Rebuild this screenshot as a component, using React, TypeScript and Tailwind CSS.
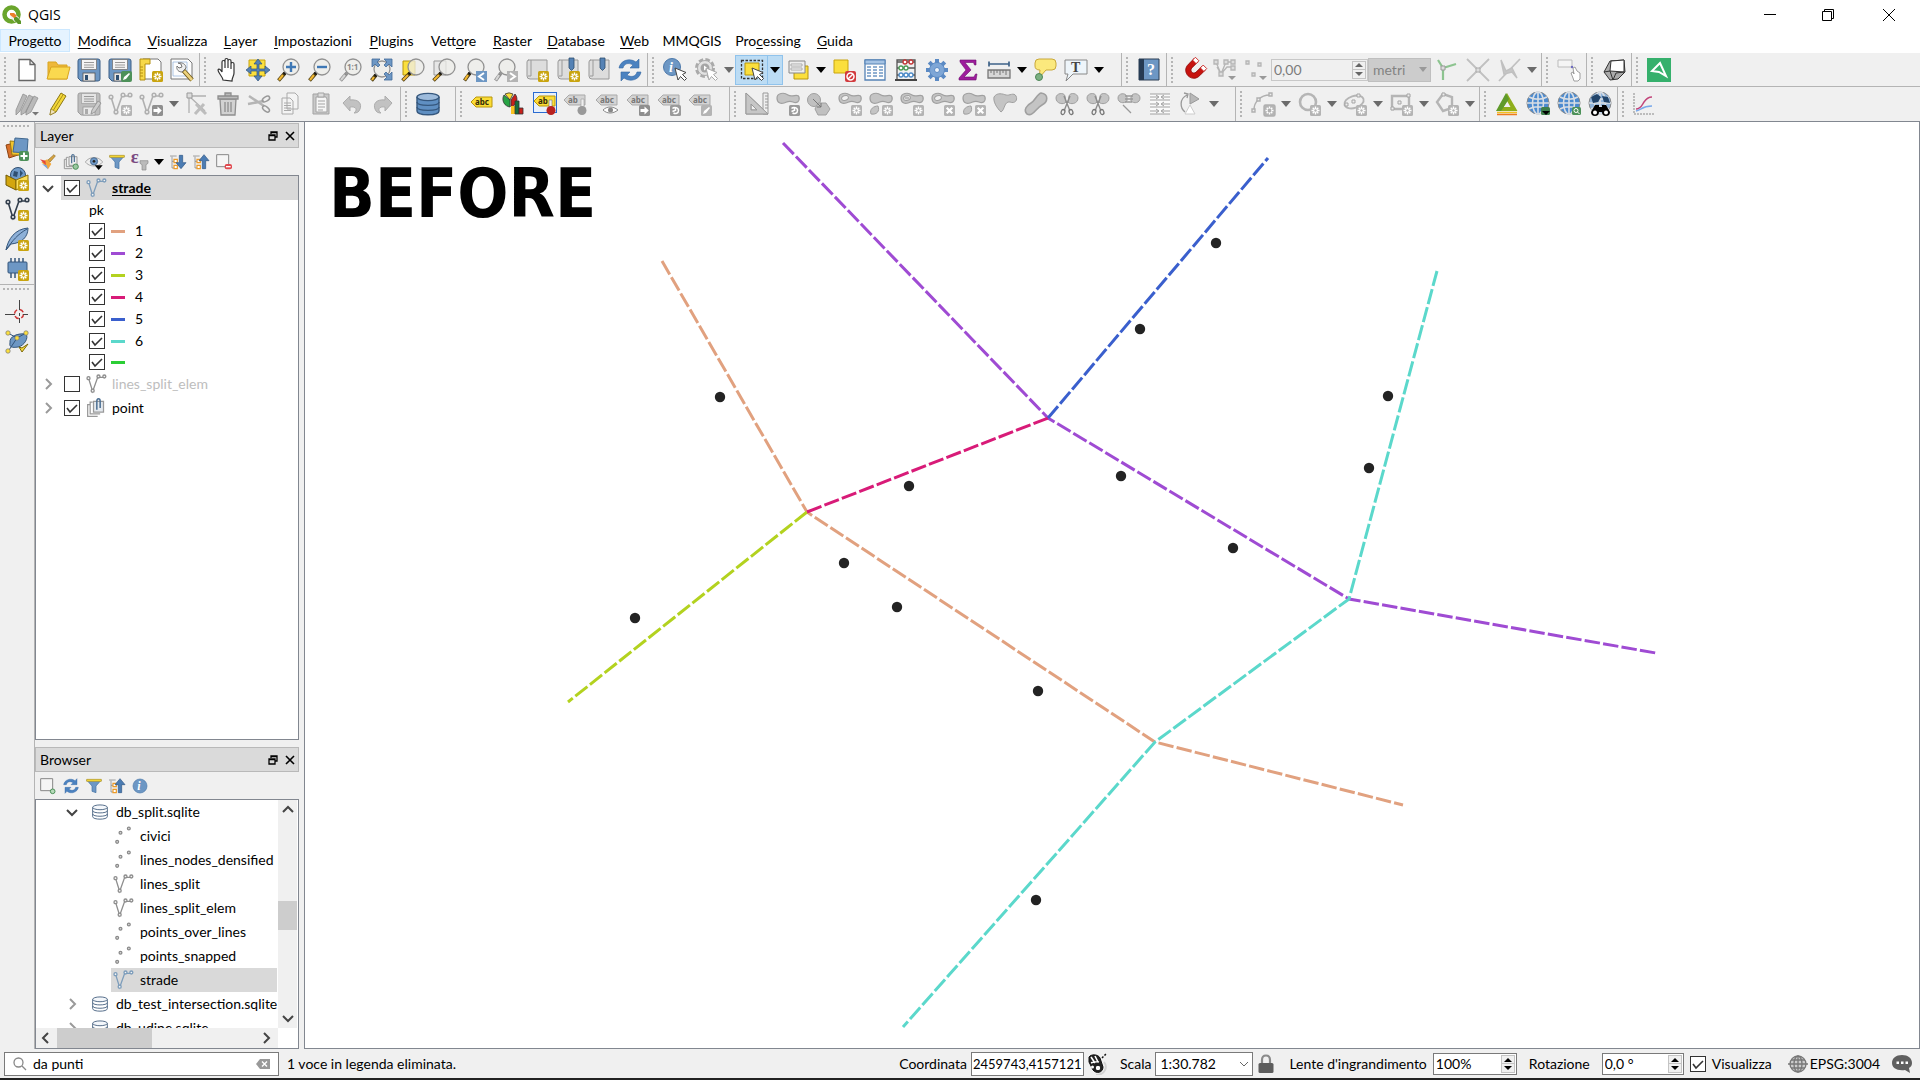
import type { ReactNode } from "react";

const BLUE = "#6d97c4";
const NAVY = "#2f4f70";

/* ---------- small parts shared by the icons ---------- */

function Svg({ children, size = "size-6" }: { children: ReactNode; size?: string }) {
  return (
    <svg viewBox="0 0 24 24" className={`${size} shrink-0 overflow-visible`} fill="none" aria-hidden="true">
      {children}
    </svg>
  );
}

function StarBadge({ off }: { off?: boolean }) {
  return (
    <g>
      <rect x="13" y="13" width="11" height="11" rx="1.5" fill={off ? "#b4b4b4" : "#c9a40f"} />
      <path d="M18.5 14.5v8M14.5 18.5h8M15.7 15.7l5.6 5.6M21.3 15.7l-5.6 5.6" stroke="#fff" strokeWidth="1.4" />
      <circle cx="18.5" cy="18.5" r="1.2" fill={off ? "#b4b4b4" : "#c9a40f"} />
    </g>
  );
}

function ArrowBadge({ fill = "#8f8f8f" }: { fill?: string }) {
  return (
    <g>
      <rect x="13" y="13" width="11" height="11" rx="1.5" fill={fill} />
      <path d="M14.5 17h4v-2.5l4.3 4-4.3 4V20h-4z" fill="#fff" />
    </g>
  );
}

function CrossBadge() {
  return (
    <g>
      <rect x="13" y="13" width="11" height="11" rx="1.5" fill="#b4b4b4" />
      <path d="M15.7 15.7l5.6 5.6M21.3 15.7l-5.6 5.6" stroke="#fff" strokeWidth="2.2" />
    </g>
  );
}

function RotateBadge() {
  return (
    <g>
      <rect x="13" y="13" width="11" height="11" rx="1.5" fill="#9a9a9a" />
      <path d="M15.5 16.5c2-2 6-1 6 2s-3 3.5-5 2.5M18 18.5l-2.5 1M18.5 16v3" stroke="#fff" strokeWidth="1.5" />
    </g>
  );
}

function Lens({ x = 14, y = 9, off }: { x?: number; y?: number; off?: boolean }) {
  return (
    <g>
      <path d={`M${x - 6} ${y + 6}L1.5 22.5`} stroke={off ? "#8c8c8c" : "#4a3b12"} strokeWidth="3.6" />
      <path d={`M${x - 8} ${y + 8}L2 22`} stroke={off ? "#d5d5d5" : "#f2b832"} strokeWidth="2.2" />
      <path d={`M${x - 5} ${y + 5}l-2 2`} stroke={off ? "#999" : "#111"} strokeWidth="3" />
      <circle cx={x} cy={y} r="8" fill="#eeeeea" fillOpacity=".75" stroke="#929292" strokeWidth="1.3" />
    </g>
  );
}

function Pointer({ off }: { off?: boolean }) {
  return (
    <path
      d="M12 10l3 12 2.5-3.5 4 4 2-2-4-4 3.5-2z"
      fill="#fff"
      stroke={off ? "#aaa" : "#444"}
      strokeWidth="1"
    />
  );
}

function Tag({ text, off, x = 0, y = 3 }: { text: string; off?: boolean; x?: number; y?: number }) {
  return (
    <g>
      <path
        d={`M${x} ${y + 5}l5-5h16v10H${x + 5}z`}
        fill={off ? "#d4d4d4" : "#fbdc35"}
        stroke={off ? "#a9a9a9" : "#b8960c"}
      />
      <text
        x={x + 4}
        y={y + 8}
        fontSize="8"
        fontWeight="700"
        fontFamily="Noto Sans, sans-serif"
        fill={off ? "#777" : "#332b08"}
      >
        {text}
      </text>
    </g>
  );
}

function Line({ color, dot = color }: { color: string; dot?: string }) {
  return (
    <g stroke={color} strokeWidth="1.6">
      <path d="M3 5l5 16 6-17h8" />
      <g fill="#f4f4f4" stroke={dot}>
        <circle cx="3" cy="5" r="1.8" />
        <circle cx="8" cy="20" r="1.8" />
        <circle cx="15" cy="3" r="1.8" />
        <circle cx="22" cy="3" r="1.8" />
      </g>
    </g>
  );
}

function Globe({ dark }: { dark?: boolean }) {
  return (
    <g>
      <circle cx="12" cy="11" r="11" fill={dark ? "#8fb4dc" : "#4c8bd0"} stroke="#8a8a8a" />
      <path d="M12 0v22M1 11h22M3 5c5 3 13 3 18 0M3 17c5-3 13-3 18 0" stroke="#d9dee4" strokeWidth="1.6" />
      <ellipse cx="12" cy="11" rx="5.5" ry="11" stroke="#d9dee4" strokeWidth="1.6" />
      {dark && <path d="M3 5l6-3 4 3-3 5-5 1zM14 4l6 1 2 6-6-1z" fill="#22456b" />}
    </g>
  );
}

const Blob = () => (
  <path
    d="M1 6c0-5 7-6 11-3s10-2 11 2-2 7-6 5-6 0-9 1-7 0-7-5z"
    fill="#c4c4c4"
    stroke="#a0a0a0"
    strokeWidth="1.2"
  />
);

const BlobHole = () => (
  <g>
    <Blob />
    <ellipse cx="7" cy="6" rx="3.5" ry="2.3" fill="#f0f0f0" stroke="#a0a0a0" transform="rotate(-20 7 6)" />
  </g>
);

const Floppy = ({ off }: { off?: boolean }) => (
  <g>
    <path
      d="M3 1h18q2 0 2 2v18q0 2-2 2H4l-3-3V3q0-2 2-2z"
      fill={off ? "#bdbdbd" : BLUE}
      stroke={off ? "#9d9d9d" : "#3c5f86"}
    />
    <rect x="4.5" y="1.5" width="15" height="10" fill={off ? "#e4e4e4" : "#f5f5f5"} stroke={off ? "#a6a6a6" : "#777"} strokeWidth=".8" />
    <path d="M7 4.5h10M7 7h10M7 9.3h10" stroke="#999" />
    <rect x="6" y="15" width="12" height="8" fill="#e8e8e8" stroke={off ? "#999" : "#555"} strokeWidth=".8" />
    <rect x="8" y="17" width="3" height="5" fill={off ? "#aaa" : NAVY} />
  </g>
);

const Cylinder = ({ fill, line }: { fill: string; line: string }) => (
  <g fill={fill} stroke={line} strokeWidth="1.4">
    <path d="M1 5v14c0 5 22 5 22 0V5" />
    <ellipse cx="12" cy="5" rx="11" ry="3.6" fill={fill === "none" ? "#f4f7fb" : "#9dbbdc"} />
    <path d="M1 10c0 4.500 22 4.500 22 0M1 15c0 4.500 22 4.500 22 0" fill="none" />
  </g>
);

const ScissorBlob = () => (
  <g>
    <path d="M1 6c0-5 8-6 9-2l1 6c-2 3-10 2-10-4zM23 6c0-5-8-6-9-2l-1 6c2 3 10 2 10-4z" fill="#c4c4c4" stroke="#a0a0a0" />
    <path d="M9 4l6 15M15 4L9 19" stroke="#8d8d8d" strokeWidth="1.4" />
    <ellipse cx="8" cy="20" rx="1.8" ry="2.6" stroke="#777" strokeWidth="1.3" transform="rotate(20 8 20)" />
    <ellipse cx="16" cy="20" rx="1.8" ry="2.6" stroke="#777" strokeWidth="1.3" transform="rotate(-20 16 20)" />
  </g>
);

const Refresh = () => (
  <g fill="#4b82c0" stroke="#3568a3" strokeWidth=".6">
    <path d="M1 10C2 3 11-1 18 4l3-3v9h-9l3-3C10 4 6 6 5 10z" />
    <path d="M23 14c-1 7-10 11-17 6l-3 3v-9h9l-3 3c5 3 9 1 10-3z" />
  </g>
);

const Funnel = () => (
  <g>
    <path d="M1 3h22l-8 9v10l-6-2v-8z" fill={BLUE} stroke="#3f6fa3" />
    <path d="M1 2h22v3H1z" fill="#fbdc35" stroke="#a8870d" strokeWidth=".8" />
  </g>
);

const Collapse = ({ down }: { down?: boolean }) => (
  <g>
    <path d="M0 3h10M3 4v17h4M3 11h4" stroke="#777" />
    <path d="M6 8h5v5H6zM6 17h5v5H6z" fill="#fff" stroke="#ec9b29" strokeWidth="1.8" />
    <path d={down ? "M14 2h5v11h5l-7.5 9L9 13h5z" : "M14 22h5V10h5l-7.5-9L9 10h5z"} fill="#4b7cb3" stroke="#2c5584" />
  </g>
);

const Book = ({ mark }: { mark?: boolean }) => (
  <g>
    <path d="M3 2h19v19H5q-3 0-3-3V4q0-2 2-2" fill="#ddd" stroke="#999" />
    <path d="M6 2v16H3" stroke="#999" />
    {mark && <path d="M13 0h5v10l-2.5 2.5L13 10z" fill="#5582b5" stroke={NAVY} strokeWidth=".8" />}
  </g>
);

/* ---------- toolbar icons ---------- */

const icons: Record<string, ReactNode> = {
  new: <path d="M4 1.5h11l5 5v16H4zM15 1.5v5h5" fill="#fff" stroke="#666" strokeWidth="1.3" />,
  open: (
    <g stroke="#d9a520">
      <path d="M2 21V4h8l2 3h9v14z" fill="#eeb83a" />
      <path d="M1 21L5 9h19l-3 12z" fill="#fad94f" />
    </g>
  ),
  save: <Floppy />,
  saveAs: (
    <g>
      <Floppy />
      <rect x="13" y="13" width="11" height="11" rx="2" fill="#4d9159" />
      <path d="M15 22l1-3 5-4 1 1-4 5z" fill="#fff" />
    </g>
  ),
  layout: (
    <g>
      <path d="M4 1h15l3 3v17H4z" fill="#fff" stroke="#777" />
      <path d="M1 1h10v5H6v16H1z" fill="#f7d848" stroke="#b48f10" />
      <path d="M1 9h3M1 12h3M1 15h3M1 18h3" stroke="#b48f10" />
      <StarBadge />
    </g>
  ),
  layoutManager: (
    <g>
      <path d="M1 1h17l4 4v16H1z" fill="#fdfdfd" stroke="#777" />
      <path d="M3 4h14v14H3z" stroke="#9ab8dd" strokeWidth=".8" />
      <path d="M13 12l9 10" stroke="#6b5413" strokeWidth="4.5" />
      <path d="M14 13l8 9" stroke="#edd27c" strokeWidth="2.8" />
      <path d="M8 5l3 1 1 3-3 1-2-2c-1 4 2 6 5 6l4-4c0-4-4-6-8-5z" fill="#eee" stroke="#777" />
    </g>
  ),
  pan: (
    <path
      d="M8 22c0-3-5-7-5-10 1-2 3 0 4 2V4c0-2 3-2 3 0v6-8c0-2 3-2 3 0v8-7c0-2 3-2 3 0v8-5c0-2 3-2 3 0v9c0 3-2 4-2 8z"
      fill="#fff"
      stroke="#333"
      strokeWidth="1.2"
    />
  ),
  panSel: (
    <g>
      <path d="M3 2h16v16H3z" fill="#fbdf3d" stroke="#c9a40f" />
      <path
        d="M12 1l4 5h-3v5h6V8l5 4-5 4v-3h-6v5h3l-4 5-4-5h3v-5H5v3l-5-4 5-4v3h6V6H8z"
        fill="#5582b5"
        stroke="#2f5580"
        strokeWidth=".7"
      />
    </g>
  ),
  zoomIn: (
    <g>
      <Lens />
      <path d="M14 4v10M9 9h10" stroke="#3f78b5" strokeWidth="2.4" />
    </g>
  ),
  zoomOut: (
    <g>
      <Lens />
      <path d="M9 9h10" stroke="#3f78b5" strokeWidth="2.4" />
    </g>
  ),
  zoomNative: (
    <g>
      <Lens off />
      <text x="8" y="12" fontSize="8" fontWeight="700" fontFamily="Noto Sans, sans-serif" fill="#888">
        1:1
      </text>
    </g>
  ),
  zoomFull: (
    <g>
      <Lens x={12} y={11} />
      <path
        d="M2 1h8L7 4l3 3-2 2-3-3-3 3zM22 1h-8l3 3-3 3 2 2 3-3 3 3zM22 22h-8l3-3-3-3 2-2 3 3 3-3z"
        fill={BLUE}
        stroke="#416b9a"
        strokeWidth=".8"
      />
    </g>
  ),
  zoomSel: (
    <g>
      <path d="M2 3h12v14H2z" fill="#fbdf3d" stroke="#b8960c" />
      <Lens x={15} />
    </g>
  ),
  zoomLayer: (
    <g>
      <path d="M2 3h12v14H2z" fill="#e6e6e6" stroke="#999" />
      <Lens x={15} />
    </g>
  ),
  zoomLast: (
    <g>
      <Lens x={13} />
      <path d="M13 13h11v11H13z" fill={BLUE} />
      <path d="M21 15l-5 3.5 5 3.5" stroke="#fff" strokeWidth="2" />
    </g>
  ),
  zoomNext: (
    <g>
      <Lens x={13} off />
      <path d="M13 13h11v11H13z" fill="#b4b4b4" />
      <path d="M16 15l5 3.5-5 3.5" stroke="#fff" strokeWidth="2" />
    </g>
  ),
  newMap: (
    <g>
      <Book />
      <StarBadge />
    </g>
  ),
  newBookmark: (
    <g>
      <Book mark />
      <StarBadge />
    </g>
  ),
  bookmarks: <Book mark />,
  refresh: <Refresh />,
  identify: (
    <g>
      <circle cx="9" cy="9" r="8.5" fill={BLUE} stroke="#4c79ab" />
      <text x="6" y="14" fontSize="14" fontStyle="italic" fontWeight="700" fontFamily="Liberation Serif, serif" fill="#fff">
        i
      </text>
      <Pointer />
    </g>
  ),
  action: (
    <g>
      <circle cx="11" cy="10" r="8.5" stroke="#aaa" strokeWidth="3" strokeDasharray="4.5 2.2" />
      <circle cx="11" cy="10" r="7.5" fill="#e2e2e2" stroke="#aaa" />
      <circle cx="11" cy="10" r="4.5" fill="#a5a5a5" />
      <path d="M10 7.5l3.500 2.500-3.500 2.500z" fill="#fff" />
      <Pointer off />
    </g>
  ),
  select: (
    <g>
      <path d="M5 5h14v12H5z" fill="#fbdf3d" stroke="#b8960c" />
      <path d="M1.500 2.500h21v18h-21z" stroke="#333" strokeDasharray="2.500 1.500" strokeWidth="1.3" />
      <Pointer />
    </g>
  ),
  selectForm: (
    <g>
      <path d="M8 8h14v13H8z" fill="#fbdf3d" stroke="#b8960c" />
      <path d="M3 3h16v12H3z" fill="#eee" stroke="#888" />
      <path d="M5 6h11v2H5zM5 10h11v2H5z" fill="#fff" stroke="#aaa" />
    </g>
  ),
  deselect: (
    <g>
      <path d="M2 2h14v13H2z" fill="#fbdf3d" stroke="#c9a40f" />
      <rect x="13" y="13" width="11" height="11" rx="2" fill="#d23a3e" />
      <circle cx="18.5" cy="18.5" r="3.5" stroke="#fff" strokeWidth="1.5" />
      <path d="M16 21l5-5" stroke="#fff" strokeWidth="1.5" />
    </g>
  ),
  table: (
    <g>
      <path d="M2 2h20v20H2z" fill="#fdfdfd" stroke="#5582b5" strokeWidth="1.3" />
      <path d="M2 2h20v4H2z" fill="#a5c3e4" stroke="#5582b5" />
      <path
        d="M4 9h4M10 9h4M16 9h4M4 12h4M10 12h4M16 12h4M4 15h4M10 15h4M16 15h4M4 18h4M10 18h4M16 18h4"
        stroke={BLUE}
        strokeWidth="1.5"
      />
    </g>
  ),
  abacus: (
    <g>
      <path d="M3 22V2h18v20M3 4h18M3 10h18M3 17h18" stroke="#555" strokeWidth="1.3" />
      <path d="M1 22h22" stroke="#444" strokeWidth="2" />
      <g fill="#fff" strokeWidth="1.3">
        <path d="M9 4a2 2 0 104 0 2 2 0 10-4 0M15 4a2 2 0 104 0 2 2 0 10-4 0" stroke="#c43636" />
        <path d="M5 10a2 2 0 104 0 2 2 0 10-4 0M10 10a2 2 0 104 0 2 2 0 10-4 0" stroke="#4d9b55" />
        <path d="M5 17a2 2 0 104 0 2 2 0 10-4 0M10 17a2 2 0 104 0 2 2 0 10-4 0M15 17a2 2 0 104 0 2 2 0 10-4 0" stroke="#4c8bc8" />
      </g>
    </g>
  ),
  gear: (
    <g>
      <path
        d="M12 1v22M1 12h22M4.200 4.200l15.600 15.600M19.800 4.200L4.200 19.800"
        stroke="#5b8ac4"
        strokeWidth="4"
      />
      <circle cx="12" cy="12" r="7.5" fill="#7ea6d6" stroke="#5b8ac4" />
      <circle cx="12" cy="12" r="2.5" fill="#eef3f9" stroke="#5b8ac4" />
    </g>
  ),
  sigma: <path d="M4 2h16v5h-1.5l-1-2.500H9L15 12l-7 7h10l1.500-3H21l-1 6H3v-2l7-8-6-8z" fill="#9e1c9c" stroke="#6d0f6e" strokeWidth=".6" />,
  measure: (
    <g>
      <path d="M2 6h20M2 3.500v5M22 3.500v5" stroke="#3e6288" strokeWidth="1.7" />
      <path d="M1 12h22v8H1z" fill="#d7d7d7" stroke="#777" strokeWidth="1.3" />
      <path d="M4 12v3M7 12v5M10 12v3M13 12v5M16 12v3M19 12v5" stroke="#777" />
    </g>
  ),
  tip: (
    <g>
      <path d="M6 1h13q4 0 4 4v3q0 4-4 4h-6l-7 8 1-8q-5 0-5-4V5q0-4 4-4z" fill="#fbe97d" stroke="#c9a83a" />
      <circle cx="6" cy="19" r="3.5" fill="#7cb083" stroke="#4d8757" />
    </g>
  ),
  text: (
    <g>
      <path d="M1 2h22v14H9l-7 7 2-7H1z" fill="#eef5fa" stroke="#888" />
      <text x="7" y="14" fontSize="14" fontWeight="700" fontFamily="Liberation Serif, serif" fill="#444">
        T
      </text>
    </g>
  ),
  help: (
    <g>
      <path d="M2 1h20v21H2z" fill={BLUE} stroke="#2c3e55" />
      <path d="M2 1h5v21H2z" fill="#263b54" />
      <text x="10" y="17" fontSize="16" fontWeight="700" fontFamily="Liberation Serif, serif" fill="#fff">
        ?
      </text>
    </g>
  ),
  magnet: (
    <g transform="rotate(45 12 12)">
      <path d="M4 4h5v8c0 4 6 4 6 0V4h5v8c0 11-16 11-16 0z" fill="#c7130f" stroke="#8e0a08" strokeWidth=".8" />
      <path d="M4 2h5v4H4zM15 2h5v4h-5z" fill="#fff" stroke="#c7130f" strokeWidth=".8" />
    </g>
  ),
  snapMode: (
    <g stroke="#b5b5b5" strokeWidth="1.3">
      <path d="M3 4l5 12 5-12h7M4 9l4 7 6-7h6" />
      <path d="M1 2h4v4H1zM11 2h4v4h-4zM18 2h4v4h-4zM18 8h4v4h-4zM6 14h4v4H6z" fill="#ddd" />
      <path d="M15 18h8l-4 4z" fill="#999" stroke="none" />
    </g>
  ),
  snapType: (
    <g stroke="#b5b5b5" strokeWidth="1.3">
      <path d="M2 3h3v3H2zM14 5h3v3h-3zM8 15h3v3H8z" fill="#ddd" />
      <path d="M15 18h8l-4 4z" fill="#999" stroke="none" />
    </g>
  ),
  topo: (
    <g>
      <path d="M3 2l5 8 13-4M8 10v12" stroke="#8dc490" strokeWidth="2.2" />
      <path d="M6 8h4v4H6z" fill="#ddd" stroke="#999" />
    </g>
  ),
  snapCross: (
    <g>
      <path d="M1 1l22 22M23 1L1 23" stroke="#c0c0c0" strokeWidth="1.8" />
      <path d="M10 10h4v4h-4z" fill="#ddd" stroke="#aaa" />
    </g>
  ),
  selfSnap: (
    <g stroke="#c0c0c0">
      <path d="M2 23L23 1" strokeWidth="1.8" />
      <path d="M4 2l5 11 6-3 5 10-5-6-8 2z" fill="#c6c6c6" strokeWidth="1.5" />
    </g>
  ),
  touch: (
    <g>
      <path d="M1 2h14v7H1z" fill="#f5f5f5" stroke="#bbb" />
      <path d="M16 20l-2-5 2-1 1 2-1-6 2-1 2 4 3 2v6l-2 2h-4z" fill="#fff" stroke="#888" strokeWidth=".8" />
      <circle cx="15" cy="9" r="1.2" fill="#6d6ac0" />
    </g>
  ),
  solid: (
    <g stroke="#333" strokeWidth="1">
      <path d="M8 3l14-1 1 12-7 7-8 1-6-8z" fill="#aaa" />
      <path d="M9 3l13-1v12l-14-1z" fill="#fff" />
      <path d="M8 13l-6 1M8 13l3 9M22 14l-8 1-3 7" />
    </g>
  ),
  plane: (
    <g>
      <path d="M0 0h24v24H0z" fill="#35b06c" />
      <path d="M13 5l6 13-7-4-7-1z" stroke="#fff" strokeWidth="2" />
    </g>
  ),

  pencils: (
    <g fill="#b9b9b9" stroke="#909090" strokeWidth=".8">
      <path d="M1 18L8 2l4 2-7 15-4 4zM6 19l8-16 4 2-7 15-5 3zM11 19l8-15 4 2-7 14-5 3z" />
      <path d="M17 20h7l-3.500 3.500z" fill="#777" stroke="none" />
    </g>
  ),
  pencil: (
    <g>
      <path d="M5 17L15 1l5 3-10 16-6 3z" fill="#f3d738" stroke="#8b7614" />
      <path d="M7.500 18L17.500 2" stroke="#a98f18" />
      <path d="M5 17l5 3-6 3z" fill="#f1e3be" stroke="#8b7614" strokeWidth=".6" />
    </g>
  ),
  saveEdits: (
    <g>
      <Floppy off />
      <path d="M14 22l1-4 6-9 3 2-6 9z" fill="#ccc" stroke="#999" />
    </g>
  ),
  addLine: (
    <g>
      <Line color="#b0b0b0" />
      <StarBadge off />
    </g>
  ),
  moveLine: (
    <g>
      <Line color="#b0b0b0" />
      <ArrowBadge />
    </g>
  ),
  vertex: (
    <g>
      <path d="M4 3v18M4 4h17M4 4l16 15" stroke="#b0b0b0" strokeWidth="1.3" />
      <path d="M2 1h5v5H2z" fill="#ddd" stroke="#999" />
      <path d="M10 22l9-10M11 12l10 10" stroke="#bdbdbd" strokeWidth="3" />
    </g>
  ),
  trash: (
    <g>
      <path d="M4 7h16l-1 16H5z" fill="#d2d2d2" stroke="#8e8e8e" strokeWidth="1.3" />
      <path d="M2 4h20v3H2zM9 4V1h6v3" fill="#bbb" stroke="#8e8e8e" strokeWidth="1.3" />
      <path d="M9 10v10M12 10v10M15 10v10" stroke="#8e8e8e" strokeWidth="1.3" />
    </g>
  ),
  cut: (
    <g>
      <path d="M2 4l15 10M1 12l16-3" stroke="#b5b5b5" strokeWidth="2.5" />
      <ellipse cx="19" cy="7" rx="4" ry="2.2" stroke="#999" strokeWidth="1.5" transform="rotate(-30 19 7)" />
      <ellipse cx="19" cy="17" rx="4" ry="2.2" stroke="#999" strokeWidth="1.5" transform="rotate(40 19 17)" />
    </g>
  ),
  copy: (
    <g fill="#f4f4f4" stroke="#aaa">
      <path d="M9 1h8l3 3v13H9zM4 6h8l3 3v13H4z" />
      <path d="M6 11h7M6 13.500h7M6 16h7M6 18.500h7" />
    </g>
  ),
  paste: (
    <g stroke="#a3a3a3">
      <path d="M4 2h16v20H4z" fill="#c9c9c9" />
      <path d="M7 5h10l1 2v13H7z" fill="#f6f6f6" />
      <path d="M9 1h6v4H9zM9 9h7M9 12h7M9 15h7M9 18h5" fill="#ddd" />
    </g>
  ),
  undo: <path d="M3 11l7-7v4c9-1 12 4 10 9-1 3-3 4-6 4 4-3 2-7-4-6v4z" fill="#c2c2c2" stroke="#adadad" />,
  redo: <path d="M21 11l-7-7v4C5 7 2 12 4 17c1 3 3 4 6 4-4-3-2-7 4-6v4z" fill="#c2c2c2" stroke="#adadad" />,
  db: <Cylinder fill="#5f8fc2" line="#35577d" />,
  label: <Tag text="abc" y={5} />,
  diagram: (
    <g strokeWidth=".8" stroke="#333">
      <path d="M8 8L3 2a8 8 0 018 0z" fill="#fbdc35" />
      <path d="M9 8l4-6a8 8 0 01-4 13z" fill="#c9201b" />
      <path d="M8 8L2 3a8 8 0 006 12z" fill="#27a344" />
      <path d="M9 14h4v8H9z" fill="#fbc322" stroke="none" />
      <path d="M13 9h4v13h-4z" fill="#18703c" />
      <path d="M17 16h4v6h-4z" fill="#c9201b" />
    </g>
  ),
  labelPin: (
    <g>
      <rect x=".5" y=".5" width="23" height="20" fill="#e8f0fa" stroke="#2a6bd1" />
      <Tag text="ab" x={1} y={4} />
      <path d="M16 8h3v9h-3z" fill="#eee" stroke="#777" strokeWidth=".6" />
      <circle cx="18" cy="18.5" r="4.5" fill="#b8201f" />
    </g>
  ),
  labelPinOff: (
    <g>
      <Tag text="ab" off />
      <path d="M17 7h3v9h-3z" fill="#eee" stroke="#999" strokeWidth=".6" />
      <circle cx="18" cy="18.5" r="4.5" fill="#999" />
    </g>
  ),
  labelShow: (
    <g>
      <Tag text="abc" off x={1} />
      <path d="M8 18c4-4 10-4 15 0-5 4-11 4-15 0z" fill="#fff" stroke="#888" />
      <circle cx="15.5" cy="18" r="2.5" fill="#888" />
    </g>
  ),
  labelMove: (
    <g>
      <Tag text="abc" off x={1} />
      <ArrowBadge />
    </g>
  ),
  labelRotate: (
    <g>
      <Tag text="abc" off x={1} />
      <RotateBadge />
    </g>
  ),
  labelEdit: (
    <g>
      <Tag text="abc" off x={1} />
      <rect x="13" y="13" width="11" height="11" rx="1.5" fill="#b4b4b4" />
      <path d="M15 22l1-3 5-4 1 1-4 5z" fill="#fff" />
    </g>
  ),
  cad: (
    <g fill="#c6c6c6" stroke="#999">
      <path d="M1 1v21h22zM6 12v6h6z" fillRule="evenodd" />
      <path d="M18 1h5v21h-5zM20 4h3M20 7h3M20 10h3M20 13h3M20 16h3" fill="#eee" />
      <path d="M1 1v21h22zM6 12v6h6z" fillRule="evenodd" />
    </g>
  ),
  rotate: (
    <g>
      <Blob />
      <RotateBadge />
    </g>
  ),
  simplify: (
    <g fill="#c0c0c0" stroke="#a0a0a0">
      <circle cx="7" cy="8" r="6.5" />
      <path d="M11 11h8l4 6-4 6h-8l-3-6z" />
      <path d="M6 7l8 8M14 11v4h-4" stroke="#777" />
    </g>
  ),
  addRing: (
    <g>
      <BlobHole />
      <StarBadge off />
    </g>
  ),
  addPart: (
    <g>
      <Blob />
      <path d="M2 22c-2-5 3-8 7-8 2 5-1 9-7 8z" fill="#c4c4c4" stroke="#a0a0a0" />
      <StarBadge off />
    </g>
  ),
  fillRing: (
    <g>
      <BlobHole />
      <ellipse cx="7" cy="6" rx="2.5" ry="1.5" fill="#bbb" />
      <StarBadge off />
    </g>
  ),
  delRing: (
    <g>
      <BlobHole />
      <CrossBadge />
    </g>
  ),
  delPart: (
    <g>
      <Blob />
      <path d="M2 22c-2-5 3-8 7-8 2 5-1 9-7 8z" fill="#c4c4c4" stroke="#a0a0a0" />
      <CrossBadge />
    </g>
  ),
  reshape: <path d="M1 5c3-5 9-3 12-2s8-3 10 1-1 8-6 6c-6-1-5 8-9 10C4 16 0 10 1 5z" fill="#c4c4c4" stroke="#a0a0a0" />,
  offset: <path d="M3 22c-4-4 0-9 4-11S13 2 17 1c8 1 7 9 1 12S9 25 3 22z" fill="#c4c4c4" stroke="#a0a0a0" strokeWidth="1.6" />,
  split: <ScissorBlob />,
  splitParts: <ScissorBlob />,
  merge: (
    <g>
      <path d="M1 6c0-5 8-6 9-1v4c-3 3-9 2-9-3zM23 6c0-5-8-6-9-1v4c3 3 9 2 9-3z" fill="#c4c4c4" stroke="#a0a0a0" />
      <path d="M8 4h8M8 7h8M8 10h7M6 13l8 8" stroke="#999" strokeWidth="1.3" />
    </g>
  ),
  mergeAttr: (
    <g>
      <path d="M2 2h20v20H2z" fill="#fafafa" />
      <path
        d="M2 2h20M2 8h20M2 15h20M2 22h20M2 5h8M14 5h8M2 12h8M14 12h8M2 19h8M14 19h8M8 3l3 2-3 2M16 3l-3 2 3 2M8 10l3 2-3 2M16 10l-3 2 3 2M8 17l3 2-3 2M16 17l-3 2 3 2"
        stroke="#a0a0a0"
      />
    </g>
  ),
  rotateSym: (
    <g>
      <path d="M8 3C0 7 1 16 6 20M5 1l4 1-1 4" stroke="#999" strokeWidth="1.3" />
      <path d="M11 1l9 6-9 5z" fill="#b8b8b8" stroke="#999" />
      <path d="M11 13l5 9H6z" fill="#fff" stroke="#ccc" />
    </g>
  ),
  arc: (
    <g stroke="#b0b0b0" strokeWidth="1.4">
      <path d="M3 18C3 10 9 3 19 3" />
      <path d="M1 17h3v3H1zM6 6h3v3H6zM18 1h3v3h-3z" fill="#eee" />
      <StarBadge off />
    </g>
  ),
  circle: (
    <g>
      <circle cx="11" cy="10" r="8" stroke="#b5b5b5" strokeWidth="2.6" />
      <StarBadge off />
    </g>
  ),
  ellipse: (
    <g>
      <ellipse cx="11" cy="10" rx="10" ry="6" stroke="#b5b5b5" strokeWidth="1.8" transform="rotate(-18 11 10)" />
      <path d="M9 8h3v3H9zM2 11h3v3H2zM14 2h3v3h-3z" fill="#eee" stroke="#a5a5a5" />
      <StarBadge off />
    </g>
  ),
  rect: (
    <g>
      <path d="M3 4h17v13H3z" stroke="#b5b5b5" strokeWidth="2.4" />
      <path d="M9 9h3v3H9zM18 2h3v3h-3zM2 15h3v3H2z" fill="#eee" stroke="#a5a5a5" />
      <StarBadge off />
    </g>
  ),
  polygon: (
    <g>
      <path d="M8 2l9 3v11l-9 3-6-9z" stroke="#b5b5b5" strokeWidth="2.4" />
      <path d="M7 1h3v3H7z" fill="#eee" stroke="#a5a5a5" />
      <StarBadge off />
    </g>
  ),
  delta: (
    <g>
      <path d="M12 5L5 17h14z" stroke="#8fae1b" strokeWidth="4" />
      <path d="M11 1L1 19h5l8-12z" fill="#5f9a2a" />
      <path d="M2 20.500h20" stroke="#f3c11d" strokeWidth="1.5" />
      <path d="M2 22.500h20" stroke="#ee7b1c" strokeWidth="1.5" />
    </g>
  ),
  globeAdd: (
    <g>
      <Globe />
      <rect x="15" y="15" width="9" height="8" rx="1.5" fill="#3f7f4c" />
      <path d="M16 19h8l-4 4z" fill="#000" />
    </g>
  ),
  globeSearch: (
    <g>
      <Globe />
      <rect x="15" y="15" width="9" height="8" rx="1.5" fill="#4d9159" />
      <circle cx="19" cy="18.5" r="2" stroke="#fff" />
      <path d="M20.500 20l2 2" stroke="#fff" />
    </g>
  ),
  globeFind: (
    <g>
      <Globe dark />
      <path d="M7 13h4v2h3v-2h4l4 7q0 4-4 4t-4-4h-3q0 4-4 4t-4-4z" fill="#000" />
      <path d="M5 20.500a2 2 0 104 0 2 2 0 10-4 0M16 20.500a2 2 0 104 0 2 2 0 10-4 0" fill="#fff" />
    </g>
  ),
  plot: (
    <g>
      <path d="M1 1v21h21" stroke="#aaa" strokeWidth="1.5" strokeDasharray="2 1" />
      <path d="M3 17c5 0 6-4 8-7s4-5 8-5" stroke="#c2457a" strokeWidth="1.4" />
      <path d="M3 19c5-1 6-5 16-5" stroke="#7aa9ea" strokeWidth="1.4" />
    </g>
  ),

  sources: (
    <g>
      <path d="M1 8l12-3 3 12-12 4z" fill="#d9702a" stroke="#8b4313" />
      <path d="M5 4l13 1v13H7z" fill="#f3c52e" stroke="#9b7a12" />
      <path d="M10 1l13 1-1 14-14-1z" fill={BLUE} stroke="#41688f" />
      <rect x="14" y="14" width="10" height="10" rx="2" fill="#4d9159" />
      <path d="M19 15.500v7M15.500 19h7" stroke="#fff" strokeWidth="2" />
    </g>
  ),
  geopackage: (
    <g>
      <circle cx="13" cy="8" r="7.5" fill="#6f9ac8" stroke={NAVY} />
      <path d="M9 4l4 1-1 5-4-1zM15 3l3 3-3 4z" fill={NAVY} />
      <path d="M1 8l10 5v10L1 18z" fill="#d3a60f" stroke="#6f5806" />
      <path d="M11 13l12-5v9l-12 6z" fill="#fbdf5a" stroke="#8d7007" />
      <StarBadge />
    </g>
  ),
  shape: (
    <g>
      <Line color="#333f4d" />
      <StarBadge />
    </g>
  ),
  feather: (
    <g>
      <path d="M1 23C3 12 10 2 23 1c0 9-6 15-17 16z" fill="#8db0d8" stroke="#34557a" />
      <path d="M1 23C7 14 13 7 22 2" stroke="#34557a" />
      <StarBadge />
    </g>
  ),
  memory: (
    <g>
      <path d="M6 1v20M10 1v20M14 1v20M18 1v20" stroke="#34557a" strokeWidth="1.5" />
      <rect x="3" y="5" width="19" height="11" rx="1" fill={BLUE} stroke="#34557a" />
      <StarBadge />
    </g>
  ),
  crosshair: (
    <g>
      <circle cx="14" cy="14" r="4.5" stroke="#c33" strokeWidth="1.5" strokeDasharray="4.500 2.600" />
      <path d="M14.500 0v10M14.500 18v5M0 14.500h10M18 14.500h5M14.500 13v3" stroke="#444" />
    </g>
  ),
  checkGeom: (
    <g>
      <path d="M5 13c-1-7 8-10 16-9 3 4-2 12-8 13s-9 0-8-4z" fill={BLUE} stroke="#34557a" />
      <path d="M3 3l9 5 9-5M12 8L4 20" stroke="#34557a" />
      <g fill="#fbdf3d" stroke="#777" strokeWidth=".7">
        <circle cx="3" cy="3" r="2.2" />
        <circle cx="21" cy="3" r="2.2" />
        <circle cx="12" cy="8" r="2.2" />
        <circle cx="3" cy="21" r="2.2" />
      </g>
      <path d="M14 17l3 5 6-8-6 4z" fill="#fbdf3d" stroke="#7c680c" />
    </g>
  ),

  style: (
    <g>
      <path d="M12 9L21 1l2 2-8 9z" fill="#d9a441" stroke="#8d6b21" />
      <path d="M2 12l9-4 6 7-5 8z" fill="#f4a73a" />
      <path d="M0 8l8 2 1 7z" fill="#e2453c" />
      <path d="M3 15l7 2 2 6z" fill="#7aa6df" />
    </g>
  ),
  addGroup: (
    <g stroke="#999" strokeWidth="1.5">
      <path d="M5 8H2v14h12M8 5H5v14h12" />
      <path d="M9 4h12v13H9z" fill="#eee" />
      <path d="M13 14V4q0-3 2-3t2 3v8" stroke="#4c6f93" strokeWidth="1.8" />
      <circle cx="19" cy="19" r="4" fill="#9ac7a0" stroke="#4d9159" />
    </g>
  ),
  eye: (
    <g>
      <path d="M-1 12C5 3 19 3 25 12 19 20 5 20-1 12z" fill="#eee" stroke="#888" />
      <circle cx="12" cy="11" r="5.5" fill={BLUE} stroke="#34557a" />
      <circle cx="12" cy="11" r="2" fill="#222" />
      <path d="M13 17h12l-6 7z" fill="#000" />
    </g>
  ),
  funnel: <Funnel />,
  epsilon: (
    <g>
      <text x="-2" y="14" fontSize="28" fontWeight="700" fontFamily="Liberation Serif, serif" fill="#7a4a82">
        ε
      </text>
      <path d="M12 10h12v4l-3 2v8h-6v-8l-3-2z" fill="#bbb" stroke="#888" />
    </g>
  ),
  expand: <Collapse down />,
  collapse: <Collapse />,
  remove: (
    <g>
      <path d="M1 1h18v18H1z" fill="#f5f5f5" stroke="#888" strokeWidth="1.5" />
      <rect x="13" y="15" width="11" height="8" rx="3" fill="#e04a50" />
      <path d="M15 19h7" stroke="#fff" strokeWidth="2" />
    </g>
  ),
  addBox: (
    <g>
      <path d="M1 1h18v18H1z" fill="#f5f5f5" stroke="#888" strokeWidth="1.5" />
      <circle cx="19" cy="20" r="3.5" fill="#b5dab9" stroke="#4d9159" strokeWidth="1.5" />
    </g>
  ),
  info: (
    <g>
      <circle cx="12" cy="12" r="10.5" fill={BLUE} stroke="#4c79ab" />
      <text x="8" y="18" fontSize="18" fontStyle="italic" fontWeight="700" fontFamily="Liberation Serif, serif" fill="#fff">
        i
      </text>
    </g>
  ),
  lineBlue: <Line color="#7d9dbb" />,
  lineGrey: <Line color="#8e8e8e" />,
  points: (
    <g fill="#ddd" stroke="#8a8a8a" strokeWidth="1.5">
      <circle cx="5" cy="19" r="1.7" />
      <circle cx="9" cy="8" r="1.7" />
      <circle cx="19" cy="3" r="1.7" />
    </g>
  ),
  group: (
    <g stroke="#999" strokeWidth="1.5">
      <path d="M5 8H2v14h12M8 5H5v14h12" />
      <path d="M9 4h12v13H9z" fill="#e4e9ee" />
      <path d="M13 14V4q0-3 2-3t2 3v8" stroke="#4c6f93" strokeWidth="1.8" />
    </g>
  ),
  dbOutline: <Cylinder fill="none" line="#4b6583" />,
};

type Tool = { icon: string; arrow?: boolean; dim?: boolean; active?: boolean };

const names = (list: string): Tool[] => list.split(" ").map((icon) => ({ icon }));

const projectTools = names("new open save saveAs layout layoutManager");
const navTools = names(
  "pan panSel zoomIn zoomOut zoomNative zoomFull zoomSel zoomLayer zoomLast zoomNext newMap newBookmark bookmarks refresh"
);
const attributeTools: Tool[] = [
  { icon: "identify" },
  { icon: "action", arrow: true, dim: true },
  { icon: "select", arrow: true, active: true },
  { icon: "selectForm", arrow: true },
  ...names("deselect table abacus gear sigma"),
  { icon: "measure", arrow: true },
  { icon: "tip" },
  { icon: "text", arrow: true },
];
const editTools: Tool[] = [
  ...names("pencils pencil saveEdits addLine"),
  { icon: "moveLine", arrow: true, dim: true },
  ...names("vertex trash cut copy paste undo redo"),
];
const labelTools = names("label diagram labelPin labelPinOff labelShow labelMove labelRotate labelEdit");
const digitizeTools: Tool[] = [
  ...names(
    "cad rotate simplify addRing addPart fillRing delRing delPart reshape offset split splitParts merge mergeAttr"
  ),
  { icon: "rotateSym", arrow: true, dim: true },
];
const shapeTools: Tool[] = ["arc", "circle", "ellipse", "rect", "polygon"].map((icon) => ({
  icon,
  arrow: true,
  dim: true,
}));

const menus = [
  { label: "Progetto", key: -1, width: "w-[70px]" },
  { label: "Modifica", key: 0, width: "w-[69px]" },
  { label: "Visualizza", key: 0, width: "w-[77px]" },
  { label: "Layer", key: 0, width: "w-[49px]" },
  { label: "Impostazioni", key: 0, width: "w-[96px]" },
  { label: "Plugins", key: 0, width: "w-[61px]" },
  { label: "Vettore", key: 4, width: "w-[63px]" },
  { label: "Raster", key: 0, width: "w-[55px]" },
  { label: "Database", key: 0, width: "w-[72px]" },
  { label: "Web", key: 0, width: "w-[45px]" },
  { label: "MMQGIS", key: -1, width: "w-[70px]" },
  { label: "Processing", key: 3, width: "w-[82px]" },
  { label: "Guida", key: 0, width: "w-[52px]" },
];

const classes = [
  { value: "1", color: "bg-[#e1a17f]" },
  { value: "2", color: "bg-[#9f4bd3]" },
  { value: "3", color: "bg-[#b3d21f]" },
  { value: "4", color: "bg-[#d81b78]" },
  { value: "5", color: "bg-[#3a5fcd]" },
  { value: "6", color: "bg-[#5bd8cb]" },
];

const dbLayers = [
  { name: "civici", icon: "points" },
  { name: "lines_nodes_densified", icon: "points" },
  { name: "lines_split", icon: "lineGrey" },
  { name: "lines_split_elem", icon: "lineGrey" },
  { name: "points_over_lines", icon: "points" },
  { name: "points_snapped", icon: "points" },
  { name: "strade", icon: "lineBlue", selected: true },
];

const roads = [
  { color: "#e1a17f", points: "662,261 807,512 1155,742 1403,805" },
  { color: "#9f4bd3", points: "783,143 1048,418 1349,599 1656,653" },
  { color: "#b3d21f", points: "807,512 568,702" },
  { color: "#d81b78", points: "807,512 1048,418" },
  { color: "#3a5fcd", points: "1048,418 1268,158" },
  { color: "#5bd8cb", points: "1437,271 1349,599 1155,742 903,1027" },
];

const markers = [
  [720, 397], [1216, 243], [1140, 329], [1388, 396], [1369, 468], [1121, 476], [909, 486],
  [1233, 548], [844, 563], [897, 607], [1038, 691], [635, 618], [1036, 900],
];

/* ---------- widgets ---------- */

function Caret({ dim }: { dim?: boolean }) {
  return (
    <svg viewBox="0 0 10 6" className="h-1.5 w-2.5" aria-hidden="true">
      <path d="M0 0h10L5 6z" fill={dim ? "#6b6b6b" : "#000"} />
    </svg>
  );
}

function Chevron({ dir, light }: { dir: "up" | "down" | "left" | "right"; light?: boolean }) {
  const d = { up: "M1 8l5-5 5 5", down: "M1 4l5 5 5-5", left: "M8 1L3 6l5 5", right: "M4 1l5 5-5 5" }[dir];
  return (
    <svg viewBox="0 0 12 12" className="size-3 shrink-0" fill="none" aria-hidden="true">
      <path d={d} stroke={light ? "#9a9a9a" : "#444"} strokeWidth="2" />
    </svg>
  );
}

function Grip() {
  return (
    <svg viewBox="0 0 11 30" className="h-[30px] w-[11px] shrink-0" aria-hidden="true">
      <path d="M5 2v28" stroke="#b5b5b5" strokeWidth="2" strokeDasharray="2 2" />
    </svg>
  );
}

function Group({ children, width }: { children?: ReactNode; width: string }) {
  return (
    <div className={`flex shrink-0 items-center border-r border-[#b4b4b4] ${width}`}>
      <Grip />
      {children}
    </div>
  );
}

function ToolButton({ icon, arrow, dim, active }: Tool) {
  return (
    <div className={`flex h-7 shrink-0 ${active ? "bg-[#bcdcf4] outline outline-[#90c3ec]" : ""}`}>
      <button type="button" aria-label={icon} className="flex w-[31px] items-center justify-center">
        <Svg>{icons[icon]}</Svg>
      </button>
      {arrow && (
        <button
          type="button"
          aria-label={`${icon} menu`}
          className={`flex w-[15px] items-center justify-center ${active ? "border-l border-[#90c3ec]" : ""}`}
        >
          <Caret dim={dim} />
        </button>
      )}
    </div>
  );
}

const Tools = ({ items }: { items: Tool[] }) => items.map((item) => <ToolButton key={item.icon} {...item} />);

function Check({ label, on = true }: { label: string; on?: boolean }) {
  return (
    <span className="relative flex size-4 shrink-0">
      <input
        type="checkbox"
        aria-label={label}
        defaultChecked={on}
        className="peer size-4 appearance-none border border-[#333] bg-white"
      />
      <svg
        viewBox="0 0 16 16"
        className="pointer-events-none absolute inset-0 hidden size-4 peer-checked:block"
        fill="none"
        aria-hidden="true"
      >
        <path d="M3 8l3 4 7-7" stroke="#333" strokeWidth="1.6" />
      </svg>
    </span>
  );
}

function Spin({ label, value, width, disabled }: { label: string; value: string; width: string; disabled?: boolean }) {
  return (
    <span
      className={`flex h-[22px] shrink-0 items-center border ${width} ${
        disabled ? "border-[#c8c8c8] bg-[#f0f0f0] text-[#7c7c7c]" : "border-[#7a7a7a] bg-white"
      }`}
    >
      <input aria-label={label} defaultValue={value} disabled={disabled} className="w-full min-w-0 px-0.5 outline-none" />
      <span className="mr-px flex w-3.5 shrink-0 flex-col border border-[#c4c4c4] bg-[#f0f0f0]">
        <button type="button" aria-label={`${label} su`} className="flex h-2 items-center justify-center border-b border-[#c4c4c4]">
          <svg viewBox="0 0 8 4" className="h-1 w-2" aria-hidden="true">
            <path d="M0 4h8L4 0z" fill={disabled ? "#666" : "#000"} />
          </svg>
        </button>
        <button type="button" aria-label={`${label} giù`} className="flex h-2 items-center justify-center">
          <svg viewBox="0 0 8 4" className="h-1 w-2" aria-hidden="true">
            <path d="M0 0h8L4 4z" fill={disabled ? "#666" : "#000"} />
          </svg>
        </button>
      </span>
    </span>
  );
}

function PanelTitle({ title }: { title: string }) {
  return (
    <div className="flex h-[25px] items-center border border-[#b9b9b9] bg-[#dadada] pl-1">
      <h2 className="flex-1">{title}</h2>
      <button type="button" aria-label={`Sgancia ${title}`} className="flex w-[17px] justify-center">
        <svg viewBox="0 0 10 10" className="size-2.5" fill="none" stroke="#000" aria-hidden="true">
          <path d="M3 3V1h6v5H7M3 1.500h6M1 4h6v5H1zM1 4.500h6" strokeWidth="1.3" />
        </svg>
      </button>
      <button type="button" aria-label={`Chiudi ${title}`} className="flex w-[17px] justify-center">
        <svg viewBox="0 0 10 10" className="size-2.5" stroke="#000" strokeWidth="1.6" aria-hidden="true">
          <path d="M1 1l8 8M9 1L1 9" />
        </svg>
      </button>
    </div>
  );
}

function PanelTools({ items }: { items: Tool[] }) {
  return (
    <div className="flex h-[27px] items-center pl-px">
      {items.map(({ icon, arrow }) => (
        <span key={icon} className="flex">
          <button type="button" aria-label={icon} className="flex w-[23px] items-center justify-center">
            <Svg size="size-4">{icons[icon]}</Svg>
          </button>
          {arrow && (
            <button type="button" aria-label={`${icon} menu`} className="flex w-[15px] items-center justify-center">
              <Caret />
            </button>
          )}
        </span>
      ))}
    </div>
  );
}

/* ---------- page sections ---------- */

function TitleBar() {
  return (
    <header className="flex h-[29px] items-center bg-white pl-0.5">
      <svg viewBox="0 0 20 20" className="size-5" fill="none" aria-hidden="true">
        <circle cx="9.5" cy="9.5" r="7" stroke="#6aa52c" strokeWidth="4.5" />
        <path d="M10 10l5 5" stroke="#f0f0f0" strokeWidth="6" />
        <path d="M12 12h3l4 4v3h-3l-4-4z" fill="#5b9629" />
        <path d="M8 8h4l3 3-3 2-4-3z" fill="#ec7f2b" />
      </svg>
      <h1 className="ml-1.5 flex-1 font-['Open_Sans',sans-serif] text-sm">QGIS</h1>
      <button type="button" aria-label="Riduci" className="flex w-[58px] justify-center">
        <svg viewBox="0 0 12 12" className="size-3" stroke="#000" aria-hidden="true">
          <path d="M0 5.500h12" />
        </svg>
      </button>
      <button type="button" aria-label="Ripristina" className="flex w-[58px] justify-center">
        <svg viewBox="0 0 12 12" className="size-3" fill="none" stroke="#000" aria-hidden="true">
          <path d="M.5 2.500h9v9h-9zM2.500 2.500v-2h9v9h-2" />
        </svg>
      </button>
      <button type="button" aria-label="Chiudi" className="flex w-[63px] justify-center">
        <svg viewBox="0 0 12 12" className="size-3" stroke="#000" aria-hidden="true">
          <path d="M0 0l12 12M12 0L0 12" />
        </svg>
      </button>
    </header>
  );
}

function MenuBar() {
  return (
    <nav className="flex h-6 bg-white">
      {menus.map(({ label, key, width }, index) => (
        <button
          key={label}
          type="button"
          className={`h-[23px] shrink-0 whitespace-nowrap ${width} ${
            index === 0 ? "border border-[#cce8ff] bg-[#e5f3ff]" : ""
          }`}
        >
          {key < 0 ? (
            label
          ) : (
            <>
              {label.slice(0, key)}
              <span className="underline underline-offset-2">{label[key]}</span>
              {label.slice(key + 1)}
            </>
          )}
        </button>
      ))}
    </nav>
  );
}

function Toolbars() {
  return (
    <div className="border-b border-[#828790]">
      <div className="flex h-[34px] border-b border-[#b4b4b4]">
        <Group width="w-[200px]">
          <Tools items={projectTools} />
        </Group>
        <Group width="w-[448px]">
          <Tools items={navTools} />
        </Group>
        <Group width="w-[474px]">
          <Tools items={attributeTools} />
        </Group>
        <Group width="w-[45px]">
          <Tools items={names("help")} />
        </Group>
        <Group width="w-[375px]">
          <Tools items={names("magnet snapMode snapType")} />
          <Spin label="Tolleranza" value="0,00" width="w-[97px]" disabled />
          <span className="relative flex shrink-0 items-center">
            <select
              aria-label="Unità"
              disabled
              className="h-6 w-[63px] appearance-none border border-[#bfbfbf] bg-[#cccccc] pl-1 text-[#838383]"
            >
              <option>metri</option>
            </select>
            <svg viewBox="0 0 8 5" className="pointer-events-none absolute right-1 h-[5px] w-2" aria-hidden="true">
              <path d="M0 0h8L4 5z" fill="#999" />
            </svg>
          </span>
          <Tools items={[...names("topo snapCross"), { icon: "selfSnap", arrow: true, dim: true }]} />
        </Group>
        <Group width="w-[45px]">
          <Tools items={names("touch")} />
        </Group>
        <Group width="w-[45px]">
          <Tools items={names("solid")} />
        </Group>
        <div className="flex items-center">
          <Grip />
          <Tools items={names("plane")} />
        </div>
      </div>
      <div className="flex h-[34px]">
        <Group width="w-[401px]">
          <Tools items={editTools} />
        </Group>
        <Group width="w-[55px]">
          <Tools items={names("db")} />
        </Group>
        <Group width="w-[274px]">
          <Tools items={labelTools} />
        </Group>
        <Group width="w-[506px]">
          <Tools items={digitizeTools} />
        </Group>
        <Group width="w-[244px]">
          <Tools items={shapeTools} />
        </Group>
        <Group width="w-[138px]">
          <Tools items={names("delta globeAdd globeSearch globeFind")} />
        </Group>
        <div className="flex items-center">
          <Grip />
          <Tools items={names("plot")} />
        </div>
      </div>
    </div>
  );
}

function SideBar() {
  const grip = (
    <svg viewBox="0 0 28 12" className="mx-auto h-3 w-7" aria-hidden="true">
      <path d="M0 4h28" stroke="#b5b5b5" strokeWidth="2" strokeDasharray="2 2" />
    </svg>
  );
  const column = (list: string) =>
    names(list).map(({ icon }) => (
      <button key={icon} type="button" aria-label={icon} className="flex h-[30px] items-center justify-center">
        <Svg>{icons[icon]}</Svg>
      </button>
    ));
  return (
    <aside className="flex w-[35px] shrink-0 flex-col border-r border-[#b4b4b4]">
      <div className="flex flex-col border-b border-[#b4b4b4]">
        {grip}
        {column("sources geopackage shape feather memory")}
      </div>
      <div className="flex flex-col">
        {grip}
        {column("crosshair checkGeom")}
      </div>
    </aside>
  );
}

function LayerPanel() {
  return (
    <section className="flex min-h-0 flex-1 flex-col">
      <PanelTitle title="Layer" />
      <PanelTools
        items={[...names("style addGroup eye funnel"), { icon: "epsilon", arrow: true }, ...names("expand collapse remove")]}
      />
      <ul className="flex-1 border border-[#828790] bg-white">
        <li className="flex h-6 items-center pl-1.5">
          <Chevron dir="down" />
          <span className="ml-[7px] flex h-6 flex-1 items-center bg-[#d9d9d9] pl-[3px]">
            <Check label="strade" />
            <span className="mr-1.5 ml-1.5">
              <Svg size="size-5">{icons.lineBlue}</Svg>
            </span>
            <span className="font-bold underline underline-offset-2">strade</span>
          </span>
        </li>
        <li className="flex h-5 items-center pl-[53px]">pk</li>
        {classes.map(({ value, color }) => (
          <li key={value} className="flex h-[22px] items-center pl-[53px]">
            <Check label={value} />
            <span className={`mr-2.5 ml-1.5 h-[3px] w-3.5 ${color}`} />
            {value}
          </li>
        ))}
        <li className="flex h-5 items-center pl-[53px]">
          <Check label="altri valori" />
          <span className="ml-1.5 h-[3px] w-3.5 bg-[#2bce35]" />
        </li>
        <li className="flex h-6 items-center pl-1.5">
          <Chevron dir="right" light />
          <span className="ml-2.5">
            <Check label="lines_split_elem" on={false} />
          </span>
          <span className="mr-1.5 ml-1.5">
            <Svg size="size-5">{icons.lineGrey}</Svg>
          </span>
          <span className="text-[#bdbdbd]">lines_split_elem</span>
        </li>
        <li className="flex h-6 items-center pl-1.5">
          <Chevron dir="right" light />
          <span className="ml-2.5">
            <Check label="point" />
          </span>
          <span className="mr-1.5 ml-1.5">
            <Svg size="size-5">{icons.group}</Svg>
          </span>
          point
        </li>
      </ul>
    </section>
  );
}

function BrowserPanel() {
  return (
    <section>
      <PanelTitle title="Browser" />
      <PanelTools items={names("addBox refresh funnel collapse info")} />
      <div className="flex h-[250px] flex-col border border-[#828790] bg-white">
        <div className="flex min-h-0 flex-1">
          <ul className="min-w-0 flex-1 overflow-hidden whitespace-nowrap">
            <li className="flex h-6 items-center pl-[30px]">
              <Chevron dir="down" />
              <span className="mr-2 ml-3.5">
                <Svg size="size-4">{icons.dbOutline}</Svg>
              </span>
              db_split.sqlite
            </li>
            {dbLayers.map(({ name, icon, selected }) => (
              <li
                key={name}
                className={`mr-px ml-[75px] flex h-6 items-center gap-[7px] overflow-hidden pl-0.5 ${selected ? "bg-[#d9d9d9]" : ""}`}
              >
                <Svg size="size-5">{icons[icon]}</Svg>
                {name}
              </li>
            ))}
            {["db_test_intersection.sqlite", "db_udine.sqlite"].map((name) => (
              <li key={name} className="flex h-6 items-center pl-[30px]">
                <Chevron dir="right" light />
                <span className="mr-2 ml-3.5">
                  <Svg size="size-4">{icons.dbOutline}</Svg>
                </span>
                {name}
              </li>
            ))}
          </ul>
          <div className="mr-px flex w-[19px] shrink-0 flex-col items-center bg-[#f0f0f0] py-1">
            <Chevron dir="up" />
            <div className="mt-[85px] h-[29px] w-full bg-[#cdcdcd]" />
            <span className="mt-auto">
              <Chevron dir="down" />
            </span>
          </div>
        </div>
        <div className="mr-5 flex h-5 items-center bg-[#f0f0f0] pr-1.5 pl-1">
          <Chevron dir="left" />
          <div className="ml-[5px] h-full w-[95px] bg-[#cdcdcd]" />
          <span className="ml-auto">
            <Chevron dir="right" />
          </span>
        </div>
      </div>
    </section>
  );
}

function MapCanvas() {
  return (
    <main className="relative min-w-0 flex-1 border border-t-0 border-[#828790] bg-white">
      <svg className="absolute inset-0 size-full" fill="none" aria-label="Mappa">
        <g transform="translate(-305 -122)">
          {roads.map(({ color, points }) => (
            <polyline key={color} points={points} stroke={color} strokeWidth="3" strokeDasharray="15.500 3.200" />
          ))}
          {markers.map(([x, y]) => (
            <circle key={`${x}-${y}`} cx={x} cy={y} r="5.2" fill="#232323" />
          ))}
        </g>
      </svg>
      <p className="pt-8 pl-6 font-['DejaVu_Sans_Condensed','Noto_Sans',sans-serif] text-[67px] leading-[80px] font-bold">
        BEFORE
      </p>
    </main>
  );
}

function StatusBar() {
  return (
    <footer className="flex h-[31px] items-center border-b-2 border-[#222] pt-px pr-2 pl-1 whitespace-nowrap">
      <label className="flex h-6 w-[275px] shrink-0 items-center border border-[#7a7a7a] bg-white px-2">
        <svg viewBox="0 0 14 14" className="size-3.5 shrink-0" fill="none" stroke="#888" strokeWidth="1.3" aria-hidden="true">
          <circle cx="5.5" cy="5.5" r="4.5" />
          <path d="M9 9l4 4" />
        </svg>
        <input aria-label="Cerca" defaultValue="da punti" className="ml-1.5 min-w-0 flex-1 outline-none" />
        <button type="button" aria-label="Cancella">
          <svg viewBox="0 0 14 10" className="h-2.5 w-3.5" aria-hidden="true">
            <path d="M4 0h10v10H4L0 5z" fill="#999" />
            <path d="M6 2.500l5 5M11 2.500l-5 5" stroke="#fff" strokeWidth="1.4" />
          </svg>
        </button>
      </label>
      <span className="ml-2 flex-1">1 voce in legenda eliminata.</span>
      <label className="flex items-center gap-1">
        Coordinata
        <input
          defaultValue="2459743,4157121"
          className="h-6 w-[113px] border border-[#7a7a7a] bg-white px-px text-[13px] outline-none"
        />
      </label>
      <button type="button" aria-label="Estensione" className="mr-3 ml-0.5">
        <svg viewBox="0 0 22 22" className="size-[22px]" fill="none" stroke="#111" aria-hidden="true">
          <path d="M10 22c9 0 12-8 8-13" stroke="#d3d3d3" strokeWidth="2" />
          <path d="M3 4c2-3 9-3 11 1l3 9c0 6-7 7-10 3L3 9z" fill="#222" />
          <path d="M5 4l4 6M9 3l3 6M5 10c3-1 5-2 8-1" stroke="#fff" strokeWidth="1.6" />
          <circle cx="12" cy="15" r="2.8" fill="#fff" />
          <circle cx="6.5" cy="14" r="1.5" fill="#fff" stroke="none" />
          <path d="M16 5l4-4" strokeDasharray="2 1.500" strokeWidth="1.5" />
        </svg>
      </button>
      <label className="flex items-center gap-1">
        Scala
        <span className="relative flex items-center">
          <select className="h-6 w-[98px] appearance-none border border-[#7a7a7a] bg-white pl-1">
            <option>1:30.782</option>
          </select>
          <svg viewBox="0 0 10 6" className="pointer-events-none absolute right-1 h-1.5 w-2.5" fill="none" stroke="#666" aria-hidden="true">
            <path d="M1 1l4 4 4-4" />
          </svg>
        </span>
      </label>
      <button type="button" aria-label="Blocca scala" className="mr-3.5 ml-1">
        <svg viewBox="0 0 18 20" className="h-5 w-[18px]" fill="none" aria-hidden="true">
          <path d="M5 10V6q0-4.500 4-4.500T13 6v4" stroke="#8a8a8a" strokeWidth="2.2" />
          <rect x="1.500" y="9" width="15" height="10" rx="1.5" fill="#5d5d5d" />
        </svg>
      </button>
      <label className="flex items-center gap-1.5">
        Lente d'ingrandimento
        <Spin label="Lente d'ingrandimento" value="100%" width="w-[84px]" />
      </label>
      <label className="ml-3 flex items-center gap-3">
        Rotazione
        <Spin label="Rotazione" value="0,0 °" width="w-[82px]" />
      </label>
      <label className="ml-1.5 flex items-center gap-1.5">
        <Check label="Visualizza" />
        Visualizza
      </label>
      <button type="button" className="ml-4 flex items-center gap-0.5">
        <svg viewBox="0 0 20 20" className="size-5" fill="none" stroke="#777" strokeWidth="1.3" aria-hidden="true">
          <circle cx="10" cy="10" r="8" fill="#ccc" />
          <ellipse cx="10" cy="10" rx="4" ry="8" />
          <path d="M0 10h20M3 6h14M3 14h14M10 2v16" />
        </svg>
        EPSG:3004
      </button>
      <button type="button" aria-label="Messaggi" className="ml-3">
        <svg viewBox="0 0 20 20" className="size-5" aria-hidden="true">
          <path d="M10 1c6 0 10 3 10 8 0 2-1 4-3 5l1 5-5-3C5 17 0 14 0 9s4-8 10-8z" fill="#5f5f5f" />
          <path d="M4.500 7.500h2.500v2.500H4.500zM9 7.500h2.500v2.500H9zM13.500 7.500H16v2.500h-2.500z" fill="#fff" />
        </svg>
      </button>
    </footer>
  );
}

export default function App() {
  return (
    <div className="flex h-screen flex-col overflow-hidden bg-[#f0f0f0] font-[Lato,sans-serif] text-sm leading-5 text-black">
      <TitleBar />
      <MenuBar />
      <Toolbars />
      <div className="flex min-h-0 flex-1">
        <SideBar />
        <div className="mr-[5px] flex w-[264px] shrink-0 flex-col gap-[7px] pt-px">
          <LayerPanel />
          <BrowserPanel />
        </div>
        <MapCanvas />
      </div>
      <StatusBar />
    </div>
  );
}
